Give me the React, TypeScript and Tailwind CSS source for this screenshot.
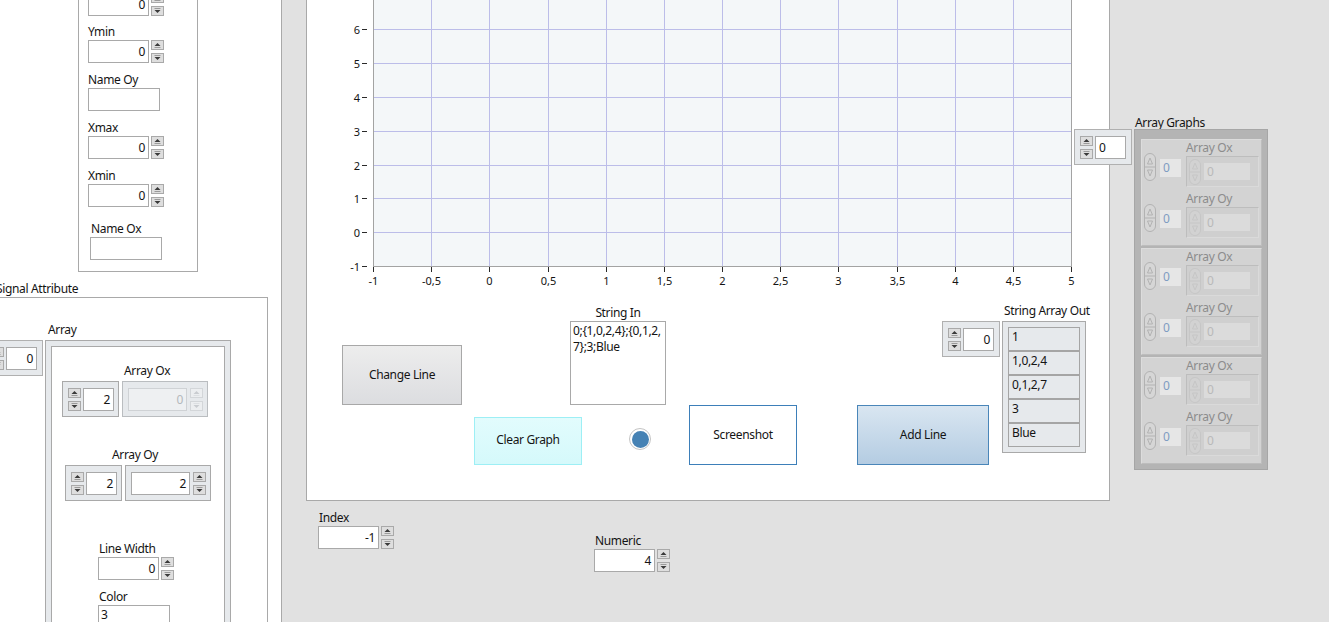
import clsx from "clsx";
import type { ReactNode } from "react";

function SpinBtn({ dir, disabled }: { dir: "up" | "down"; disabled?: boolean }) {
  const tri = disabled ? "#c9ccd0" : "#3a3a3a";
  const bar = disabled ? "#dcdfe2" : "#9a9a9a";
  return (
    <div
      className={clsx(
        "flex h-[10px] w-[13px] items-center justify-center border",
        disabled ? "border-[#d3d6d9] bg-[#eceef0]" : "border-[#a9a9a9] bg-[#dedede]"
      )}
    >
      <svg width="11" height="8" viewBox="0 0 11 8">
        {dir === "up" ? (
          <>
            <path d="M2.5 5 L5.5 2 L8.5 5 Z" fill={tri} />
            <line x1="2.5" y1="6.5" x2="8.5" y2="6.5" stroke={bar} />
          </>
        ) : (
          <>
            <line x1="2.5" y1="1.5" x2="8.5" y2="1.5" stroke={bar} />
            <path d="M2.5 3 L5.5 6 L8.5 3 Z" fill={tri} />
          </>
        )}
      </svg>
    </div>
  );
}

function Spin({ disabled }: { disabled?: boolean }) {
  return (
    <div className="flex flex-col gap-[3px]">
      <SpinBtn dir="up" disabled={disabled} />
      <SpinBtn dir="down" disabled={disabled} />
    </div>
  );
}

function Box({
  className,
  children,
  left,
  disabled,
}: {
  className?: string;
  children?: ReactNode;
  left?: boolean;
  disabled?: boolean;
}) {
  return (
    <div
      className={clsx(
        "flex h-[23px] shrink-0 items-center border px-[3px]",
        left ? "justify-start" : "justify-end",
        disabled ? "border-[#cfd2d5] bg-[#eef0f2] text-[#b4b8bc]" : "border-[#a9a9a9] bg-white",
        className
      )}
    >
      {children}
    </div>
  );
}

// string controls keep their text at the top
function StrBox({ className, children }: { className?: string; children?: ReactNode }) {
  return (
    <div className={clsx("h-[23px] shrink-0 border border-[#a9a9a9] bg-white px-[2px] pt-[1px]", className)}>
      {children}
    </div>
  );
}

// labels sit a little lower in their 16px slot, like LabVIEW's
function Label({ className, children }: { className?: string; children: ReactNode }) {
  return <div className={clsx("h-[16px] whitespace-nowrap leading-[20px]", className)}>{children}</div>;
}

function Numeric({ value, className }: { value: string; className?: string }) {
  return (
    <div className={clsx("flex items-center gap-[2px]", className)}>
      <Box className="w-[61px]">{value}</Box>
      <Spin />
    </div>
  );
}

function IndexFrame({ value, left, className }: { value: string; left?: boolean; className?: string }) {
  return (
    <div
      className={clsx(
        "relative flex w-[58px] shrink-0 items-center gap-[2px] border border-[#b0b0b0] bg-[#e6e9ec] px-[5px] pb-[5px] pt-[6px]",
        className
      )}
    >
      <Spin />
      <Box className="w-[31px]" left={left}>
        {value}
      </Box>
    </div>
  );
}

function ElemFrame({ value }: { value: string }) {
  return (
    <div className="flex w-[57px] shrink-0 items-center gap-[2px] border border-[#a9a9a9] bg-[#e6e9ec] px-[5px] pb-[5px] pt-[6px]">
      <Spin />
      <Box className="w-[31px]">{value}</Box>
    </div>
  );
}

function ElemFrameOff({ value, disabled }: { value: string; disabled?: boolean }) {
  return (
    <div
      className={clsx(
        "flex w-[86px] shrink-0 items-center gap-[3px] border bg-[#e6e9ec] px-[5px] pb-[5px] pt-[6px]",
        disabled ? "border-[#babdc0]" : "border-[#a9a9a9]"
      )}
    >
      <Box className="w-[59px]" disabled={disabled}>
        {value}
      </Box>
      <Spin disabled={disabled} />
    </div>
  );
}

function LeftPanel() {
  return (
    <div className="flex w-[282px] shrink-0 flex-col border-r border-[#a9a9a9] bg-white">
      <div className="ml-[78px] mt-[-20px] flex w-[120px] flex-col border border-[#a9a9a9] pb-[11px] pl-[9px] pt-[12px]">
        <Numeric value="0" />
        <Label className="mt-[6px]">Ymin</Label>
        <Numeric className="mt-[2px]" value="0" />
        <Label className="mt-[7px]">Name Oy</Label>
        <StrBox className="mt-[2px] w-[72px]" />
        <Label className="mt-[7px]">Xmax</Label>
        <Numeric className="mt-[2px]" value="0" />
        <Label className="mt-[7px]">Xmin</Label>
        <Numeric className="mt-[2px]" value="0" />
        <Label className="ml-[3px] mt-[12px]">Name Ox</Label>
        <StrBox className="ml-[2px] mt-[2px] w-[72px]" />
      </div>

      <Label className="ml-[-4px] mt-[7px]">Signal Attribute</Label>
      <div className="ml-[-30px] mt-[2px] flex w-[298px] flex-1 flex-col border border-[#a9a9a9] pt-[22px]">
        <Label className="ml-[77px]">Array</Label>
        <div className="mt-[4px] flex items-start">
          <IndexFrame className="ml-[14px]" value="0" />
          <div className="ml-[2px] flex h-[300px] w-[186px] flex-col border border-[#a9a9a9] bg-[#e6e9ec] p-[5px]">
            <div className="flex flex-1 flex-col border border-[#a9a9a9] bg-white">
              <Label className="ml-[72px] mt-[14px]">Array Ox</Label>
              <div className="ml-[10px] mt-[4px] flex gap-[3px]">
                <ElemFrame value="2" />
                <ElemFrameOff value="0" disabled />
              </div>
              <Label className="ml-[60px] mt-[28px]">Array Oy</Label>
              <div className="ml-[13px] mt-[4px] flex gap-[3px]">
                <ElemFrame value="2" />
                <ElemFrameOff value="2" />
              </div>
              <Label className="ml-[47px] mt-[38px]">Line Width</Label>
              <Numeric className="ml-[46px] mt-[2px]" value="0" />
              <Label className="ml-[47px] mt-[7px]">Color</Label>
              <StrBox className="ml-[46px] mt-[2px] w-[72px]">3</StrBox>
            </div>
          </div>
        </div>
      </div>
    </div>
  );
}

const xLabels = ["-1", "-0,5", "0", "0,5", "1", "1,5", "2", "2,5", "3", "3,5", "4", "4,5", "5"];
const yVals = [-1, 0, 1, 2, 3, 4, 5, 6, 7];

function PlotSvg() {
  const xOf = (i: number) => Math.round(66 + i * 58.17) + 0.5;
  const yOf = (v: number) => Math.round(266 - (v + 1) * 33.83) + 0.5;
  return (
    <svg width="802" height="292" className="block shrink-0" fontSize="11" letterSpacing="0">
      <rect x="66.5" y="-5" width="698" height="271.5" fill="#f4f7f9" stroke="#a3a3a3" />
      {xLabels.slice(1, -1).map((_, i) => (
        <line key={"gx" + i} x1={xOf(i + 1)} x2={xOf(i + 1)} y1={0} y2={266} stroke="#bcbde9" />
      ))}
      {yVals.slice(1).map((v) => (
        <line key={"gy" + v} x1={67} x2={764} y1={yOf(v)} y2={yOf(v)} stroke="#bcbde9" />
      ))}
      {yVals.map((v) => (
        <g key={"ty" + v}>
          <line x1={55} x2={60} y1={yOf(v)} y2={yOf(v)} stroke="#2a2a2a" />
          <text x={53} y={yOf(v) + 4} textAnchor="end" fill="#141414">
            {v}
          </text>
        </g>
      ))}
      {xLabels.map((l, i) => (
        <g key={"tx" + i}>
          <line x1={xOf(i)} x2={xOf(i)} y1={267} y2={272} stroke="#2a2a2a" />
          <text x={xOf(i)} y={285} textAnchor="middle" fill="#141414">
            {l}
          </text>
        </g>
      ))}
    </svg>
  );
}

const outRows = ["1", "1,0,2,4", "0,1,2,7", "3", "Blue"];

function GraphPanel() {
  return (
    <div className="ml-[24px] flex w-[804px] shrink-0 flex-col border-x border-b border-[#a9a9a9] bg-white pb-[35px]">
      <PlotSvg />
      <div className="flex items-start">
        <div className="flex w-[693px] shrink-0 flex-col">
          <div className="flex h-[113px] items-start">
            <div className="ml-[35px] mt-[53px] flex h-[60px] w-[120px] items-center justify-center border border-[#a8a8a8] bg-gradient-to-b from-[#ededed] to-[#dcdde0]">
              Change Line
            </div>
            <div className="ml-[108px] mt-[11px] flex w-[96px] flex-col items-center">
              <Label>String In</Label>
              <div className="mt-[2px] h-[84px] w-[96px] whitespace-nowrap border border-[#a9a9a9] bg-white px-[2px] pt-[1px] text-left">
                {"0;{1,0,2,4};{0,1,2,"}
                <br />
                {"7};3;Blue"}
              </div>
            </div>
            <IndexFrame className="ml-[276px] mt-[29px]" value="0" />
          </div>
          <div className="flex h-[60px] items-start">
            <div className="ml-[167px] mt-[12px] flex h-[48px] w-[108px] items-center justify-center border border-[#9deff5] bg-gradient-to-b from-[#e2fcfd] to-[#d5f9fb] pb-[2px]">
              Clear Graph
            </div>
            <div className="ml-[47px] mt-[23px] flex h-[22px] w-[22px] items-center justify-center rounded-full border-[1.5px] border-[#c4c4c4] bg-white">
              <div className="h-[17px] w-[17px] rounded-full bg-[#4682b4]" />
            </div>
            <div className="ml-[38px] flex h-[60px] w-[108px] items-center justify-center border border-[#3d7fb9] bg-white pb-[1px]">
              Screenshot
            </div>
            <div className="ml-[60px] flex h-[60px] w-[132px] items-center justify-center border border-[#4a86b9] bg-gradient-to-b from-[#d9e6f1] to-[#b4cce2] pb-[1px]">
              Add Line
            </div>
          </div>
        </div>
        <div className="ml-[2px] mt-[9px] flex flex-col">
          <Label className="ml-[2px]">String Array Out</Label>
          <div className="mt-[4px] flex w-[84px] flex-col border border-[#a9a9a9] bg-[#e6e9ec] p-[5px]">
            {outRows.map((r) => (
              <div key={r} className="h-[24px] border border-[#a5a5a5] bg-[#e6e9ec] pl-[3px] pt-[1px]">
                {r}
              </div>
            ))}
          </div>
        </div>
      </div>
    </div>
  );
}

function Pill({ faint, small }: { faint?: boolean; small?: boolean }) {
  const c = faint ? "#c6c6c6" : "#b2b2b2";
  const h = small ? 26 : 28;
  const m = h / 2;
  return (
    <svg width="12" height={h} viewBox={`0 0 12 ${h}`} className="block shrink-0">
      <rect x="0.5" y="0.5" width="11" height={h - 1} rx="5.5" fill={faint ? "#d2d2d2" : "#d6d6d6"} stroke={c} />
      <line x1="1" y1={m} x2="11" y2={m} stroke={c} />
      <path d={`M3.5 ${m - 3} L6 ${m - 9} L8.5 ${m - 3} Z`} fill="none" stroke={c} />
      <path d={`M3.5 ${m + 3} L6 ${m + 9} L8.5 ${m + 3} Z`} fill="none" stroke={c} />
    </svg>
  );
}

function GraphRow() {
  return (
    <div className="flex items-start">
      <div className="ml-[2px]">
        <Pill />
      </div>
      <div className="ml-[4px] mt-[6px] flex h-[18px] w-[21px] items-center bg-[#e6e6e6] pl-[3px] text-[#7f9cc2]">0</div>
      <div className="ml-[5px] mt-[3px] flex h-[31px] w-[73px] items-center border border-t-[#bdbdbd] border-l-[#bdbdbd] border-b-[#dadada] border-r-[#dadada] bg-[#cfcfcf] pl-[2px]">
        <Pill faint small />
        <div className="ml-[3px] flex h-[17px] w-[46px] items-center bg-[#dbdbdb] pl-[3px] text-[#b9b9b9]">0</div>
      </div>
    </div>
  );
}

function GraphCluster() {
  return (
    <div className="flex h-[107px] w-[121px] flex-col border border-t-[#dcdcdc] border-l-[#dcdcdc] border-b-[#bdbdbd] border-r-[#bdbdbd] bg-[#d3d3d3] text-[#8c8c8c]">
      <div className="ml-[44px] mt-[1px] h-[12px] leading-[14px]">Array Ox</div>
      <GraphRow />
      <div className="ml-[44px] mt-[5px] h-[12px] leading-[14px]">Array Oy</div>
      <GraphRow />
    </div>
  );
}

function ArrayGraphs() {
  return (
    <div className="ml-[2px] flex flex-col">
      <Label className="ml-[1px] mt-[113px]">Array Graphs</Label>
      <div className="flex w-[134px] flex-col gap-[2px] border border-[#a6a6a6] bg-[#b4b4b4] pb-[5px] pl-[6px] pr-[5px] pt-[9px]">
        <GraphCluster />
        <GraphCluster />
        <GraphCluster />
      </div>
    </div>
  );
}

export default function App() {
  return (
    <div className="flex h-[622px] w-[1329px] overflow-hidden bg-[#e1e1e1] font-[family-name:'Segoe_UI','Noto_Sans',sans-serif] text-[12px] leading-[16px] tracking-[-0.35px] text-[#141414]">
      <LeftPanel />
      <div className="flex flex-1 flex-col">
        <div className="flex items-start">
          <GraphPanel />
          <IndexFrame className="ml-[-36px] mt-[129px]" value="0" left />
          <ArrayGraphs />
        </div>
        <div className="flex items-start">
          <div className="ml-[36px] mt-[7px] flex flex-col">
            <Label className="ml-[1px]">Index</Label>
            <div className="mt-[2px] flex items-center gap-[2px]">
              <Box className="w-[61px]">-1</Box>
              <Spin />
            </div>
          </div>
          <div className="ml-[200px] mt-[30px] flex flex-col">
            <Label className="ml-[1px]">Numeric</Label>
            <Numeric className="mt-[2px]" value="4" />
          </div>
        </div>
      </div>
    </div>
  );
}
